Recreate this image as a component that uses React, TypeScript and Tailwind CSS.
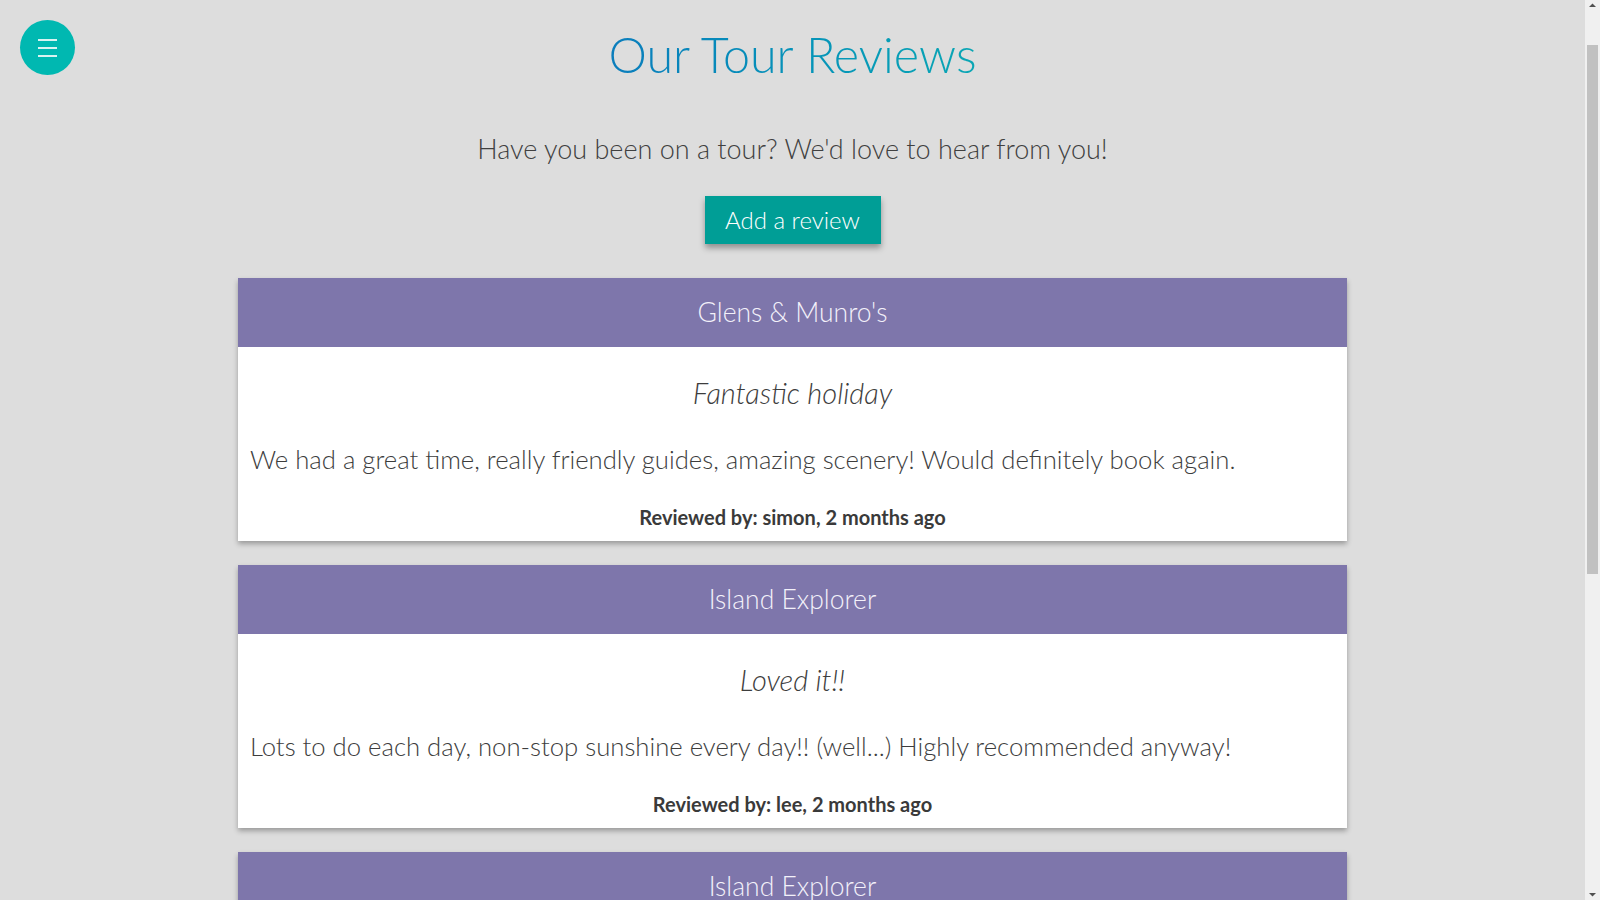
import React from "react";

const reviews = [
  { tour: "Glens & Munro's", title: "Fantastic holiday", body: "We had a great time, really friendly guides, amazing scenery! Would definitely book again.", by: "simon, 2 months ago" },
  { tour: "Island Explorer", title: "Loved it!!", body: "Lots to do each day, non-stop sunshine every day!! (well...) Highly recommended anyway!", by: "lee, 2 months ago" },
  { tour: "Island Explorer", title: "Great trip", body: "Beautiful beaches and wonderful wildlife. The ferry crossings were a highlight.", by: "anna, 3 months ago" },
];

export default function App() {
  return (
    <div className="h-screen flex bg-[#dddddd] text-[#3d3d3d] overflow-hidden" style={{ fontFamily: "Lato, 'Open Sans', sans-serif" }}>
      <div className="relative flex-1 overflow-hidden">
        <button className="absolute left-[20px] top-[20px] w-[55px] h-[55px] rounded-full bg-[#00b8b1] flex flex-col items-center justify-center gap-[6px]">
          <span className="block w-[19px] h-[2px] bg-[#d9f3f1]" />
          <span className="block w-[19px] h-[2px] bg-[#d9f3f1]" />
          <span className="block w-[19px] h-[2px] bg-[#d9f3f1]" />
        </button>
        <div className="flex flex-col items-center pt-[22px] pb-[40px]">
          <h1 className="text-[48.5px] leading-[64px] font-light bg-gradient-to-r from-[#0b7dbc] to-[#0aa6b4] bg-clip-text text-transparent">
            Our Tour Reviews
          </h1>
          <p className="mt-[47px] text-[27px] leading-[32px] font-light text-[#404040]">
            Have you been on a tour? We'd love to hear from you!
          </p>
          <button className="mt-[31px] w-[176px] h-[48px] bg-[#009e96] text-white text-[24px] font-light shadow-[0_4px_6px_rgba(0,0,0,0.35)]">
            Add a review
          </button>
          <div className="mt-[34px] w-[1109px] flex flex-col gap-[24px]">
            {reviews.map((r, i) => (
              <div key={i} className="bg-white shadow-[0_3px_5px_rgba(0,0,0,0.3)]">
                <div className="h-[69px] bg-[#7e76ab] flex items-center justify-center text-[26.5px] font-light text-[#f3f1fa]">
                  {r.tour}
                </div>
                <div className="px-[12px] pt-[28px] pb-[12px] flex flex-col">
                  <div className="text-center italic text-[29px] font-light leading-[36px]">{r.title}</div>
                  <div className="mt-[32px] text-[25.7px] font-light leading-[32px]">{r.body}</div>
                  <div className="mt-[30px] text-center text-[20px] font-bold leading-[24px] text-[#3a3a3a]">Reviewed by: {r.by}</div>
                </div>
              </div>
            ))}
          </div>
        </div>
      </div>
      <div className="w-[15px] h-full bg-[#f0f0f0] flex flex-col items-center shrink-0">
        <svg width="15" height="17" viewBox="0 0 15 17" className="shrink-0">
          <path d="M4 7 L7.5 3.5 L11 7 Z" fill="#505050" />
        </svg>
        <div className="mt-[28px] w-[11px] h-[529px] bg-[#c1c1c1]" />
        <div className="flex-1" />
        <svg width="15" height="17" viewBox="0 0 15 17" className="shrink-0">
          <path d="M4 10 L7.5 13.5 L11 10 Z" fill="#505050" />
        </svg>
      </div>
    </div>
  );
}
